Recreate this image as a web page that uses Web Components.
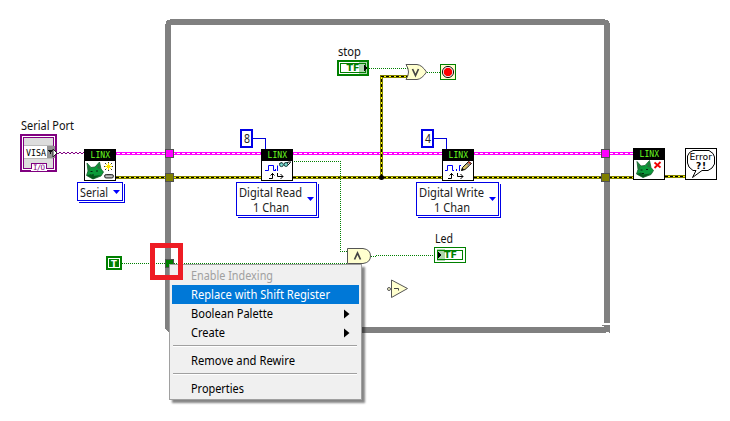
<!DOCTYPE html>
<html lang="en">
<head>
<meta charset="utf-8">
<title>Block Diagram</title>
<style>
html,body{margin:0;background:#fff}
body{width:730px;height:421px;overflow:hidden}
</style>
</head>
<body>
<block-diagram></block-diagram>
<script>
const FONT = '"Noto Sans","Open Sans",sans-serif';

function define(name, render) {
  customElements.define(name, class extends HTMLElement {
    connectedCallback() {
      if (this.shadowRoot) return;
      const attr = (k, d = '') => this.getAttribute(k) ?? d;
      this.attachShadow({ mode: 'open' }).innerHTML = render(attr, this);
      if (this.hasAttribute('x')) {
        this.style.left = attr('x') + 'px';
        this.style.top = attr('y') + 'px';
      }
    }
  });
}

/* One line of text fitted to a known width */
define('fit-text', a => `<style>:host{display:block;height:17px;width:${a('w')}px}svg{display:block;overflow:visible}
text{font:${a('size', '12')}px ${FONT};fill:currentColor}</style>
<svg width="${a('w')}" height="17"><text x="0" y="13" textLength="${a('w')}" lengthAdjust="spacingAndGlyphs">${a('text')}</text></svg>`);

define('wire-layer', () => {
  const pink = (x1, x2) => `<path d="M${x1} 153.5H${x2}" stroke="#f0f" stroke-width="3"/><path d="M${x1 + 1} 153.5H${x2}" stroke="#fff" stroke-dasharray="3 2"/>`;
  const err = d => `<path d="${d}" stroke="#808000" stroke-width="3"/><path d="${d}" stroke="#ff0"/><path d="${d}" stroke="#000" stroke-dasharray="3 2"/>`;
  const bool = d => `<path d="${d}" stroke="#008000" stroke-dasharray="1 1"/>`;
  const tunnel = (x, y, c) => `<rect x="${x + .5}" y="${y + .5}" width="8" height="8" fill="${c}" stroke="#505050"/>`;
  return `<style>:host{display:block}svg{display:block}</style>
<svg width="730" height="421" fill="none" shape-rendering="crispEdges">
<path d="M170 19H605V20H608V21H609V23H610V323H604V25H171V327H604V326H602V325H610V333H609V332H606V333H170V332H168V331H167V330H166V329H165V24H166V21H167V20H170Z" fill="#808080"/>
${pink(116, 261)}${pink(293, 442)}${pink(474, 633)}
${err('M116 177.5H261')}${err('M293 177.5H442')}${err('M474 177.5H633')}${err('M665 176.5H685')}
${err('M381.5 177V76.5H408')}
<circle cx="381.5" cy="177.5" r="2.5" fill="#000" shape-rendering="auto"/>
<path d="M57 153.5H84" stroke="#800080" stroke-dasharray="2 2"/><path d="M59 152.5H84" stroke="#800080" stroke-dasharray="2 2"/>
<path d="M253 138.5H265.5V149M434 138.5H446.5V149" stroke="#0000dc"/>
${bool('M369 68.5H408')}${bool('M427 72.5H440')}${bool('M294 161.5H340.5V251.5H348')}
${bool('M122 263.5H348')}${bool('M371 256.5H376')}${bool('M376 255.5H434')}
${tunnel(165, 149, '#f0f')}${tunnel(165, 173, '#808000')}${tunnel(601, 149, '#f0f')}${tunnel(601, 173, '#808000')}${tunnel(165, 259, '#008000')}
</svg>`;
});

const FOX = `<path d="M3 14L7 18.500L11 18L15.500 13L17 20L19.500 23L17 27L9 30L2.500 26.500L4 22Z" fill="#0b9a3a" stroke="#1c5a2c" stroke-width=".8"/>
<path d="M4 16L6.500 20L5 23ZM15 15L13 19L16 20Z" fill="#2d6b3d"/><path d="M3 26.500L7 25L9 27L17 26L9 30Z" fill="#05591c"/>
<path d="M6.500 22.500h2M12 22h2M8 26h2" stroke="#02250c"/>`;
const PULSE = `<path d="M4 21.5H7.5V16.5H12.5V21.5H14M16.5 16.5V22" stroke="#00f" fill="none"/><path d="M14.500 20v2" stroke="#00f"/>
<path d="M8 29.5H11.5V24M9.5 26.5L11.5 24.5L13.5 26.5M16.5 24V27.5H22M19.5 25L22 27.5L19.5 30" stroke="#000" fill="none"/>`;
const ART = {
  open: FOX + `<path d="M20 17.500h9M24.500 13v9M21 14l7 7M28 14l-7 7" stroke="#333"/><path d="M21 17.500h7M24.500 14v7M22 15l5 5M27 15l-5 5" stroke="#ffe600"/><rect x="20.500" y="25.500" width="9" height="3.500" rx="1.700" fill="#999" stroke="#333"/><path d="M22.500 27.500h5" stroke="#eee" stroke-dasharray="1 1"/>`,
  read: PULSE + `<path d="M18 15l3-1.500M23 14.500l5-1.500h2M27 16l2.500-2.500" stroke="#111" fill="none"/><circle cx="20.500" cy="15.700" r="1.900" fill="#7fe0d6" stroke="#143f3b"/><circle cx="25" cy="15.500" r="1.900" fill="#7fe0d6" stroke="#143f3b"/>`,
  write: `<path d="M3 21.500H5.500V16.500H10.500V21.500H12M14.500 20v2M17.500 22V16.500H19" stroke="#00f" fill="none"/><path d="M6 29.500H9.500V24M7.500 26.500L9.500 24.500L11.500 26.500M15.500 24V27.500H21M18.500 25L21 27.500L18.500 30" stroke="#000" fill="none"/><path d="M19.500 21.500L20.500 18.500L26.500 12.500L29.500 14.500L23 20.500Z" fill="#d8c26a" stroke="#111"/><path d="M25 14.500l2.500 2" stroke="#888" stroke-width="2"/><path d="M26.500 13l2 1.500" stroke="#c01818" stroke-width="1.500"/><path d="M19 22l1.500-3 1.500 1.500z" fill="#000"/>`,
  close: `<g transform="translate(1 -.5)">${FOX}</g><path d="M21.500 14.500l6 5M27.500 14l-6 6" stroke="#f00000" stroke-width="1.800"/>`
};

/* 32x32 VI icon with the LINX banner */
define('vi-icon', a => `<style>:host{display:block;position:absolute}svg{display:block}</style>
<svg width="32" height="32"><rect x=".5" y=".5" width="31" height="31" fill="#fff" stroke="#000"/><rect width="32" height="12" fill="#000"/>
<text x="6.500" y="9" textLength="19.500" font-family="DejaVu Sans Mono,monospace" font-size="8" fill="#6bff20">LINX</text>${ART[a('kind')]}</svg>`);

define('error-icon', () => `<style>:host{display:block;position:absolute}svg{display:block}</style>
<svg width="32" height="32" fill="none"><rect x=".5" y=".5" width="31" height="31" fill="#fff" stroke="#000"/>
<path d="M8 2.500H24L28 5.500L29.500 9V16L27 20L23 22.500H17L7.500 29.500L11 22.500H8L4 19L2.500 15V8L4.500 4.500Z" stroke="#000"/>
<text x="4.500" y="12" textLength="22.500" lengthAdjust="spacingAndGlyphs" font-family="DejaVu Sans,sans-serif" font-size="8.500" fill="#000">Error</text>
<text x="11" y="21" textLength="10" font-family="DejaVu Sans,sans-serif" font-size="9" font-weight="700" fill="#000">?!</text></svg>`);

/* Polymorphic selector: stacked blue card with lines of text and an arrow */
define('type-selector', a => `<style>:host{display:block;position:absolute;color:#222}
.card{box-sizing:border-box;width:${a('w')}px;height:${a('h')}px;background:#fff;border:1px solid #0000e6;box-shadow:1px 1px #fff,2px 2px #0000e6;display:flex;align-items:center;justify-content:space-between;padding:0 2px}
.lines{display:flex;flex-direction:column;align-items:center;gap:0}
::slotted(fit-text){margin-bottom:-2px}svg{display:block}</style>
<div class="card"><div class="lines"><slot></slot></div><svg width="7" height="4"><path d="M0 0H7L3.500 4Z" fill="#0000ff"/></svg></div>`);

define('num-constant', a => `<style>:host{display:flex;position:absolute;box-sizing:border-box;width:13px;height:19px;border:2px solid #0000e6;background:#fff;justify-content:center;align-items:center;color:#222}</style><fit-text w="6" text="${a('value')}"></fit-text>`);

define('bool-terminal', a => {
  const ctl = a('kind') === 'control';
  return `<style>:host{display:block;position:absolute}svg{display:block}</style>
<svg width="32" height="16" fill="none" shape-rendering="crispEdges">
${ctl ? '<rect x="1" y="1" width="30" height="14" fill="#fff" stroke="#008000" stroke-width="2"/>' : '<rect x=".5" y=".5" width="31" height="15" fill="#fff" stroke="#008000"/>'}
<rect x="3.500" y="3.500" width="25" height="9" stroke="#008000"/>
<rect x="${ctl ? 22 : 3}" y="2" width="8" height="12" fill="#008000" opacity=".32"/>
<text x="${ctl ? 9.5 : 10}" y="11" textLength="13" lengthAdjust="spacingAndGlyphs" font-family="DejaVu Sans,sans-serif" font-size="8.500" font-weight="700" fill="#008000">TF</text>
<path d="M${ctl ? 27 : 4} 4.500V11.500L${ctl ? 30.5 : 7.5} 8Z" fill="#000"/></svg>`;
});

define('visa-control', () => `<style>:host{display:block;position:absolute}svg{display:block}</style>
<svg width="38" height="38" fill="none" shape-rendering="crispEdges"><rect x="1" y="1" width="35" height="36" fill="#fff" stroke="#800080" stroke-width="2"/>
<rect x="3.500" y="3.500" width="30" height="31" fill="#ddd" stroke="#800080"/>
<rect x="4" y="12" width="23" height="12" fill="#fff"/><path d="M4 11.500H33M4 24.500H33" stroke="#bbb"/>
<rect x="27" y="12" width="8" height="12" fill="#929292"/><path d="M28 16H33L30.500 20Z" fill="#111"/>
<path d="M33 15V23L37 19Z" fill="#fff" stroke="#222" shape-rendering="auto"/>
<text x="6" y="22" textLength="20" lengthAdjust="spacingAndGlyphs" font-family="DejaVu Sans Mono,monospace" font-size="9.500" fill="#000">VISA</text>
<rect x="11" y="29" width="16" height="8" fill="#fff"/><path d="M11.500 35V29.500H26.500V35" stroke="#800080"/>
<text x="13" y="36" textLength="12" font-family="DejaVu Sans Mono,monospace" font-size="7.500" fill="#800080">I/O</text></svg>`);

define('true-constant', () => `<style>:host{display:block;position:absolute}svg{display:block}</style>
<svg width="16" height="14" shape-rendering="crispEdges"><rect width="16" height="14" fill="#008000"/><rect x="2.500" y="2.500" width="11" height="9" fill="none" stroke="#fff"/>
<text x="8" y="10.500" text-anchor="middle" font-family="DejaVu Sans,sans-serif" font-size="8.500" font-weight="700" fill="#fff">T</text></svg>`);

const GATES = {
  or: [23, 17, `<path d="M1 .5H12Q17 1 21.500 8Q17 15 12 15.500H1Q6 8 1 .5Z" fill="#ffffcf" stroke="#555"/><path d="M7.500 5L10.500 11.500L13.500 5" stroke="#444" stroke-width="1.700"/>`],
  and: [25, 17, `<path d="M.5 .5H16Q23.500 1.500 23.500 8Q23.500 14.500 16 15.500H.5Z" fill="#ffffcf" stroke="#555"/><path d="M7.500 11.500L10.500 5L13.500 11.500" stroke="#444" stroke-width="1.700"/>`],
  not: [22, 20, `<path d="M4.500 1L20.500 9.500L4.500 18.500Z" fill="#ffffcf" stroke="#555"/><circle cx="2" cy="10" r="1.500" fill="#ffffcf" stroke="#555"/><path d="M7 9.500H11.500V11.500" stroke="#444"/>`],
  halt: [16, 16, `<rect x=".5" y=".5" width="15" height="15" fill="#ffffcf" stroke="#008000"/><circle cx="8" cy="8" r="5.600" fill="#fff" stroke="#111"/><circle cx="8" cy="8" r="4.300" fill="#f00"/>`]
};
define('logic-node', a => {
  const [w, h, art] = GATES[a('kind')];
  return `<style>:host{display:block;position:absolute}svg{display:block}</style><svg width="${w}" height="${h}" fill="none">${art}</svg>`;
});

define('node-label', a => `<style>:host{display:block;position:absolute;color:#111}</style><fit-text w="${a('w')}" text="${a('text')}"></fit-text>`);

define('focus-frame', () => `<style>:host{display:block;position:absolute;box-sizing:border-box;width:33px;height:37px;border:5px solid #ee1c24}</style>`);

define('menu-item', (a, el) => `<style>:host{display:flex;box-sizing:border-box;height:19px;margin:0 2px;padding:0 9px 0 19px;align-items:center;justify-content:space-between;color:#000}
:host([disabled]){color:#a0a0a0}:host([active]){background:#0078d7;color:#fff}svg{display:block}</style>
<fit-text w="${a('w')}" text="${a('text')}"></fit-text>${el.hasAttribute('submenu') ? '<svg width="6" height="10"><path d="M0 .5L5.500 5L0 9.500Z" fill="#000"/></svg>' : ''}`);

define('menu-rule', () => `<style>:host{display:block;height:1px;margin:3px 4px 4px 3px;background:#a0a0a0;border-bottom:1px solid #fff}</style>`);

define('context-menu', () => `<style>:host{display:flex;flex-direction:column;position:absolute;box-sizing:border-box;width:193px;height:136px;padding-top:1px;background:#f0f0f0;border:1px solid #a0a0a0;box-shadow:3px 3px 2px rgba(0,0,0,.48)}</style><slot></slot>`);

define('block-diagram', () => `<style>:host{display:block;position:relative;width:730px;height:421px;background:#fff;overflow:hidden}</style>
<wire-layer></wire-layer>
<node-label x="21" y="117" w="53" text="Serial Port"></node-label>
<visa-control x="20" y="134"></visa-control>
<vi-icon x="84" y="149" kind="open"></vi-icon>
<type-selector x="77" y="182" w="46" h="19"><fit-text w="28" text="Serial"></fit-text></type-selector>
<num-constant x="240" y="129" value="8"></num-constant>
<vi-icon x="261" y="149" kind="read"></vi-icon>
<type-selector x="236" y="182" w="81" h="34"><fit-text w="63" text="Digital Read"></fit-text><fit-text w="36" text="1 Chan"></fit-text></type-selector>
<num-constant x="421" y="129" value="4"></num-constant>
<vi-icon x="442" y="149" kind="write"></vi-icon>
<type-selector x="416" y="182" w="83" h="34"><fit-text w="65" text="Digital Write"></fit-text><fit-text w="36" text="1 Chan"></fit-text></type-selector>
<vi-icon x="633" y="148" kind="close"></vi-icon>
<error-icon x="685" y="148"></error-icon>
<node-label x="338" y="43" w="23" text="stop"></node-label>
<bool-terminal x="337" y="60" kind="control"></bool-terminal>
<logic-node x="405" y="64" kind="or"></logic-node>
<logic-node x="440" y="64" kind="halt"></logic-node>
<true-constant x="106" y="256"></true-constant>
<logic-node x="347" y="248" kind="and"></logic-node>
<node-label x="435" y="230" w="18" text="Led"></node-label>
<bool-terminal x="434" y="247" kind="indicator"></bool-terminal>
<logic-node x="387" y="279" kind="not"></logic-node>
<context-menu x="169" y="264">
<menu-item disabled w="82" text="Enable Indexing"></menu-item>
<menu-item active w="139" text="Replace with Shift Register"></menu-item>
<menu-item submenu w="82" text="Boolean Palette"></menu-item>
<menu-item submenu w="34" text="Create"></menu-item>
<menu-rule></menu-rule>
<menu-item w="104" text="Remove and Rewire"></menu-item>
<menu-rule></menu-rule>
<menu-item w="53" text="Properties"></menu-item>
</context-menu>
<focus-frame x="150" y="243"></focus-frame>`);
</script>
</body>
</html>
